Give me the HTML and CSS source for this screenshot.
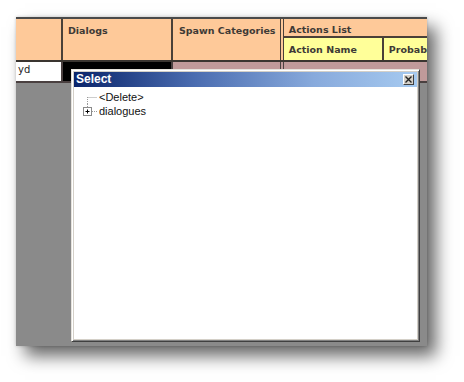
FILE: index.html
```html
<!DOCTYPE html>
<html>
<head>
<meta charset="utf-8">
<link rel="stylesheet" href="styles.css">
</head>
<body>
<div class="shot">
  <div class="hdr">
    <div class="hc c1"></div>
    <div class="hc c2">Dialogs</div>
    <div class="hc c3">Spawn Categories</div>
    <div class="hc c4">
      <div class="al">Actions List</div>
      <div class="sub">
        <div class="an">Action Name</div>
        <div class="pr">Probab</div>
      </div>
    </div>
  </div>
  <div class="row">
    <div class="rc r1">yd</div>
    <div class="rc r2"></div>
    <div class="rc r3"></div>
    <div class="rc r4"></div>
  </div>

  <div class="dlg">
    <div class="title">
      <span class="ttext">Select</span>
      <span class="close"><svg width="7" height="7" viewBox="0 0 7 7"><path d="M0.5 0.5L6.5 6.5M6.5 0.5L0.5 6.5" stroke="#222" stroke-width="1.4"/></svg></span>
    </div>
    <div class="body">
      <div class="item">
        <svg class="conn" width="19" height="14" viewBox="0 0 19 14"><path d="M7.5 7V14M7.5 7.5H17" stroke="#9a9a9a" stroke-width="1" stroke-dasharray="1 1"/></svg>
        <span>&lt;Delete&gt;</span>
      </div>
      <div class="item">
        <svg class="conn" width="19" height="14" viewBox="0 0 19 14"><path d="M7.5 0V3" stroke="#9a9a9a" stroke-width="1" stroke-dasharray="1 1"/><path d="M12 7.5H18" stroke="#9a9a9a" stroke-width="1" stroke-dasharray="1 1"/><rect x="3.5" y="3.5" width="8" height="8" fill="#fff" stroke="#8a8a8a"/><path d="M5.5 7.5H9.5M7.5 5.5V9.5" stroke="#000"/></svg>
        <span>dialogues</span>
      </div>
    </div>
  </div>
</div>
</body>
</html>
```

FILE: styles.css
```css
html, body {
  margin: 0;
  padding: 0;
  background: #ffffff;
}
body {
  width: 464px;
  height: 382px;
  overflow: hidden;
}
.shot {
  position: relative;
  margin-left: 16px;
  margin-top: 17px;
  width: 411px;
  height: 329px;
  background: #8a8a8a;
  box-shadow: 9px 10px 16px rgba(0, 0, 0, 0.6), 0 0 3px rgba(0, 0, 0, 0.2);
  overflow: hidden;
  font-family: "DejaVu Sans", sans-serif;
}
.hdr {
  display: flex;
  height: 41px;
  border-top: 2px solid #4a4a4a;
  border-bottom: 2px solid #3a3530;
  background: #fec999;
}
.hc {
  box-sizing: border-box;
  font-size: 9.5px;
  font-weight: bold;
  color: #3e3a36;
  padding: 6px 0 0 5px;
  border-right: 2px solid #4a4038;
}
.c1 { width: 47px; }
.c2 { width: 110px; }
.c3 { width: 111px; border-right: 4px double #4a4038; padding-left: 6px; }
.c4 {
  flex: 1;
  border-right: none;
  padding: 0;
  display: flex;
  flex-direction: column;
}
.al {
  height: 19px;
  box-sizing: border-box;
  padding: 5px 0 0 5px;
  border-bottom: 2px solid #4a4038;
}
.sub {
  flex: 1;
  display: flex;
  background: #ffff99;
}
.an {
  width: 100px;
  box-sizing: border-box;
  padding: 6px 0 0 5px;
  border-right: 2px solid #4a4038;
}
.pr {
  flex: 1;
  padding: 6px 0 0 5px;
}
.row {
  display: flex;
  height: 19px;
  border-bottom: 2px solid #4a4040;
  background: #c09a9a;
}
.rc {
  box-sizing: border-box;
  border-right: 2px solid #4a4040;
}
.r1 {
  width: 47px;
  background: #ffffff;
  font-size: 10px;
  color: #222;
  padding: 2px 0 0 2px;
}
.r2 { width: 110px; background: #000; }
.r3 { width: 111px; border-right: 4px double #4a4040; }
.r4 { flex: 1; border-right: none; }

.dlg {
  position: absolute;
  left: 55px;
  top: 52px;
  width: 349px;
  height: 273px;
  box-sizing: border-box;
  background: #d4d0c8;
  border-top: 1px solid #e6e3dc;
  border-left: 1px solid #e6e3dc;
  border-right: 1px solid #404040;
  border-bottom: 1px solid #404040;
  box-shadow: inset 1px 1px 0 #ffffff, inset -1px -1px 0 #808080;
  padding: 2px;
  display: flex;
  flex-direction: column;
}
.title {
  height: 15px;
  display: flex;
  align-items: center;
  justify-content: space-between;
  background: linear-gradient(90deg, #0a246a 0%, #4a6cb0 35%, #88aadc 70%, #a6caf0 100%);
  padding: 0 3px 0 2px;
}
.ttext {
  font-family: "Liberation Sans", Arial, sans-serif;
  font-weight: bold;
  font-size: 12px;
  color: #ffffff;
  line-height: 15px;
}
.close {
  width: 11px;
  height: 11px;
  box-sizing: border-box;
  background: #d4d0c8;
  border-top: 1px solid #ffffff;
  border-left: 1px solid #ffffff;
  border-right: 1px solid #404040;
  border-bottom: 1px solid #404040;
  display: flex;
  align-items: center;
  justify-content: center;
}
.close svg { display: block; }
.body {
  flex: 1;
  background: #ffffff;
  padding: 3px 0 0 6px;
  font-family: "Liberation Sans", Arial, sans-serif;
  font-size: 11px;
  color: #111;
}
.item {
  display: flex;
  align-items: center;
  height: 14px;
}
.conn { display: block; flex: none; }
```
